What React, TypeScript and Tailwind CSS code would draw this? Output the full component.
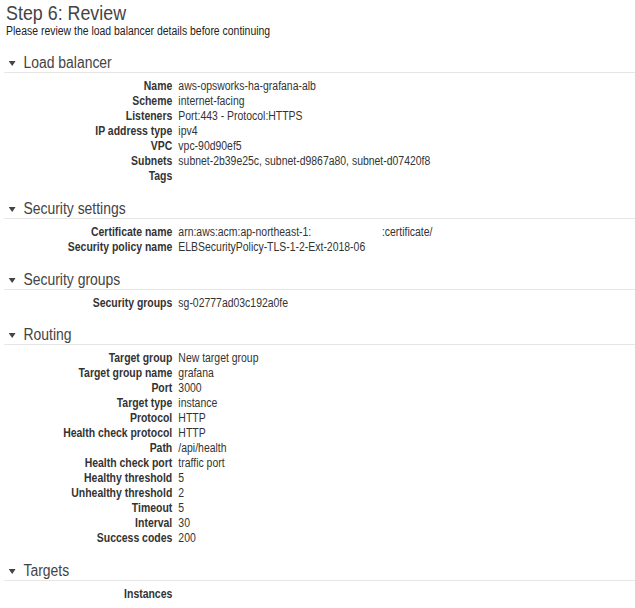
import React from "react";

type Row = [string, string];

const sections: { title: string; rows: Row[] }[] = [
  {
    title: "Load balancer",
    rows: [
      ["Name", "aws-opsworks-ha-grafana-alb"],
      ["Scheme", "internet-facing"],
      ["Listeners", "Port:443 - Protocol:HTTPS"],
      ["IP address type", "ipv4"],
      ["VPC", "vpc-90d90ef5"],
      ["Subnets", "subnet-2b39e25c, subnet-d9867a80, subnet-d07420f8"],
      ["Tags", ""],
    ],
  },
  {
    title: "Security settings",
    rows: [
      ["Certificate name", "cert"],
      ["Security policy name", "ELBSecurityPolicy-TLS-1-2-Ext-2018-06"],
    ],
  },
  {
    title: "Security groups",
    rows: [["Security groups", "sg-02777ad03c192a0fe"]],
  },
  {
    title: "Routing",
    rows: [
      ["Target group", "New target group"],
      ["Target group name", "grafana"],
      ["Port", "3000"],
      ["Target type", "instance"],
      ["Protocol", "HTTP"],
      ["Health check protocol", "HTTP"],
      ["Path", "/api/health"],
      ["Health check port", "traffic port"],
      ["Healthy threshold", "5"],
      ["Unhealthy threshold", "2"],
      ["Timeout", "5"],
      ["Interval", "30"],
      ["Success codes", "200"],
    ],
  },
  {
    title: "Targets",
    rows: [["Instances", ""]],
  },
];

function Caret() {
  return (
    <svg width="8" height="5" viewBox="0 0 8 5" className="mr-[9px] ml-[5px] shrink-0">
      <path d="M0 0 H8 L4 5 Z" fill="#444" />
    </svg>
  );
}

function Value({ v }: { v: string }) {
  if (v === "cert") {
    return (
      <span className="flex">
        <span className="w-[234px]">arn:aws:acm:ap-northeast-1:</span>
        <span>:certificate/</span>
      </span>
    );
  }
  return <span>{v}</span>;
}

export default function App() {
  return (
    <div className="bg-white w-[635px] h-[608px] overflow-hidden">
      {/* the screenshot is squeezed horizontally, so the whole sheet is too */}
      <div
        className="w-[730px] origin-top-left scale-x-[0.87] pl-[5px] text-[#333]"
        style={{ fontFamily: '"Liberation Sans", Arial, sans-serif' }}
      >
        <h1 className="text-[20.5px] leading-[24px] text-[#444] pl-[2px] pt-[1px]">Step 6: Review</h1>
        <p className="text-[12px] leading-[15px] text-[#222] pl-[2px] mt-[-1px]">
          Please review the load balancer details before continuing
        </p>
        <div className="mt-[15px]">
          {sections.map((s) => (
            <section key={s.title} className="mb-[16px] last:mb-0 [&:nth-child(3)]:mb-[15px]">
              <h2 className="flex items-center h-[18px] text-[16px] text-[#444] border-b border-[#e6e6e6] box-content">
                <Caret />
                {s.title}
              </h2>
              <div className="mt-[6px]">
                {s.rows.map(([k, v]) => (
                  <div key={k} className="flex text-[12px] leading-[15px]">
                    <span className="w-[200px] shrink-0 text-right font-bold pr-[7px]">{k}</span>
                    <Value v={v} />
                  </div>
                ))}
              </div>
            </section>
          ))}
        </div>
      </div>
    </div>
  );
}
